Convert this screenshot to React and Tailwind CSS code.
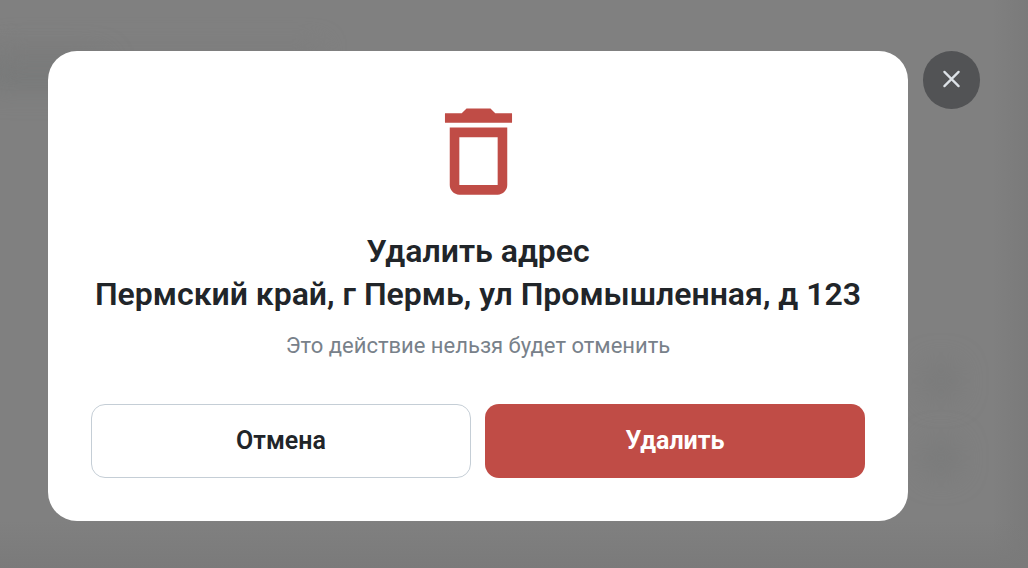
import React from 'react';

const address = 'Пермский край, г Пермь, ул Промышленная, д 123';

function TrashIcon() {
  return (
    <svg viewBox="0 0 24 24" className="size-[115px] fill-[#c04c46]" aria-hidden="true">
      <path d="M6 19c0 1.1.9 2 2 2h8c1.1 0 2-.9 2-2V7H6v12zM8 9h8v10H8V9zm7.5-5l-1-1h-5l-1 1H5v2h14V4h-3.5z" />
    </svg>
  );
}

function CloseIcon() {
  return (
    <svg viewBox="0 0 20 20" className="size-5" fill="none" stroke="#dde2e7" strokeWidth="2.3" strokeLinecap="round" aria-hidden="true">
      <path d="M2.4 1.9l14.2 14.2M16.6 1.9L2.4 16.1" />
    </svg>
  );
}

// Blurred page content showing through the overlay
function Backdrop() {
  return (
    <div className="absolute inset-0 overflow-hidden bg-[#808080]" aria-hidden="true">
      <div className="absolute -left-5 top-[62px] h-5 w-[120px] bg-[#727575] blur-lg" />
      <div className="absolute left-0 top-[46px] h-4 w-[320px] bg-[#7c7c7c] blur-md" />
      <div className="absolute right-[74px] top-[368px] size-[26px] rounded-full bg-[#727373] blur-lg" />
      <div className="absolute right-[74px] top-[445px] size-[26px] rounded-full bg-[#717373] blur-lg" />
      <div className="absolute inset-y-0 right-0 w-9 bg-linear-to-r from-[#808080]/0 to-[#7a7a7a]" />
      <div className="absolute inset-x-0 bottom-0 h-12 bg-linear-to-b from-[#808080]/0 to-[#7a7a7a]" />
    </div>
  );
}

function App() {
  return (
    <div className="relative min-h-screen font-['Roboto','Liberation_Sans',sans-serif]">
      <Backdrop />
      <div className="relative flex items-start gap-[15px] px-12 pt-[51px] pb-12">
        <div
          role="dialog"
          aria-modal="true"
          aria-labelledby="dialog-title"
          aria-describedby="dialog-text"
          className="flex min-w-0 flex-1 flex-col items-center rounded-[29px] bg-white p-[43px] text-center"
        >
          <TrashIcon />
          <h2 id="dialog-title" className="mt-[21px] text-[32px] leading-[43px] font-semibold whitespace-nowrap text-[#212529]">
            Удалить адрес
            <br />
            {address}
          </h2>
          <p id="dialog-text" className="mt-[15px] text-[22px] leading-[29px] text-[#78818a]">
            Это действие нельзя будет отменить
          </p>
          <div className="mt-11 grid w-full grid-cols-2 gap-[14px] text-[25px] leading-8">
            <button type="button" className="h-[74px] rounded-[14px] border border-[#c5ced6] bg-white font-semibold text-[#212529]">
              Отмена
            </button>
            <button type="button" className="h-[74px] rounded-[14px] bg-[#c04c46] font-bold text-white">
              Удалить
            </button>
          </div>
        </div>
        <button
          type="button"
          aria-label="Закрыть"
          className="flex h-[58px] w-[57px] shrink-0 items-center justify-center rounded-full bg-[#525355]"
        >
          <CloseIcon />
        </button>
      </div>
    </div>
  );
}

export default App;
